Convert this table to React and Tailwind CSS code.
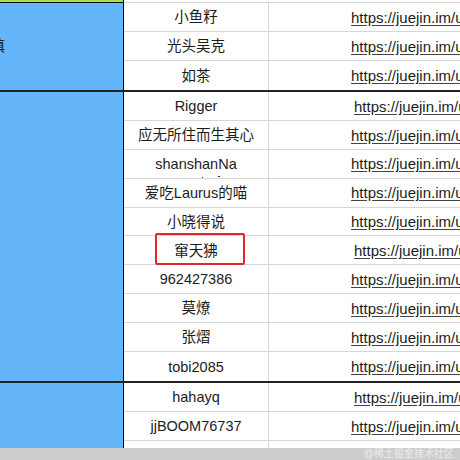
const URL = "https://juejin.im/user/5a2f";

const groups = [
  {
    label: "填",
    rowH: "h-[29px]",
    rows: [
      { name: "小鱼籽", pad: "pl-[82px]" },
      { name: "光头吴克", pad: "pl-[82px]" },
      { name: "如茶", pad: "pl-[82px]" },
    ],
  },
  {
    rowH: "h-[28.9px]",
    rows: [
      { name: "Rigger", pad: "pl-[85px]" },
      { name: "应无所住而生其心", pad: "pl-[82px]" },
      { name: "shanshanNa", pad: "pl-[82px]", dots: true },
      { name: "爱吃Laurus的喵", pad: "pl-[82px]" },
      { name: "小晓得说", pad: "pl-[82px]" },
      { name: "窜天狒", pad: "pl-[85px]" },
      { name: "962427386", pad: "pl-[82px]" },
      { name: "莫燎", pad: "pl-[82px]" },
      { name: "张熠", pad: "pl-[82px]" },
      { name: "tobi2085", pad: "pl-[82px]" },
    ],
  },
];

const lastRows = [
  { name: "hahayq", pad: "pl-[85px]" },
  { name: "jjBOOM76737", pad: "pl-[82px]" },
];

function Row({ row, h }) {
  return (
    <div className={`flex ${h}`}>
      <div className="relative flex w-[145px] shrink-0 items-center justify-center overflow-hidden whitespace-nowrap border-r border-[#d6d6d6] pt-[2px]">
        {row.name}
        {row.dots && (
          <>
            <span className="absolute left-[78px] top-[27px] h-[1px] w-[1px] bg-[#555]" />
            <span className="absolute left-[94px] top-[26px] h-[1.5px] w-[1.5px] bg-[#333]" />
          </>
        )}
      </div>
      <div className={`flex min-w-0 flex-1 items-center overflow-hidden whitespace-nowrap pt-[2px] ${row.pad}`}>
        <span className="text-[15px] underline decoration-[#444] underline-offset-2">{URL}</span>
      </div>
    </div>
  );
}

export default function App() {
  return (
    <div
      className="relative h-[460px] w-[460px] overflow-hidden bg-white text-[14.5px] text-[#1c1c1c]"
      style={{ fontFamily: '"Liberation Sans", "Noto Sans CJK SC", sans-serif' }}
    >
      <div className="flex h-[3px]">
        <div className="w-[124px] shrink-0 border-b border-r border-black bg-[#a2e05c]" />
        <div className="min-w-0 flex-1 border-b border-[#d6d6d6]" />
      </div>

      {groups.map((g, gi) => (
        <div key={gi} className="flex border-b-2 border-[#222]">
          <div className="flex w-[124px] shrink-0 items-center overflow-hidden border-r border-black bg-[#64b5fa]">
            {g.label && <span className="-ml-[9.5px] text-[14.5px]">{g.label}</span>}
          </div>
          <div className="flex min-w-0 flex-1 flex-col divide-y divide-[#d6d6d6]">
            {g.rows.map((r) => (
              <Row key={r.name} row={r} h={g.rowH} />
            ))}
          </div>
        </div>
      ))}

      <div className="flex h-[65px]">
        <div className="w-[124px] shrink-0 border-r border-black bg-[#64b5fa]" />
        <div className="flex min-w-0 flex-1 flex-col divide-y divide-[#d6d6d6]">
          {lastRows.map((r) => (
            <Row key={r.name} row={r} h="h-[29px]" />
          ))}
          <div className="flex flex-1">
            <div className="w-[145px] shrink-0 border-r border-[#d6d6d6]" />
          </div>
        </div>
      </div>

      <div className="flex h-[12px] items-center justify-end bg-[#cdcdcd] pr-[6px]">
        <span className="text-[10px] leading-none text-[#ececec]">@稀土掘金技术社区</span>
      </div>

      <div className="absolute left-[155px] top-[233px] h-[32px] w-[90px] rounded-[2px] border-2 border-[#e3262a]" />
    </div>
  );
}
